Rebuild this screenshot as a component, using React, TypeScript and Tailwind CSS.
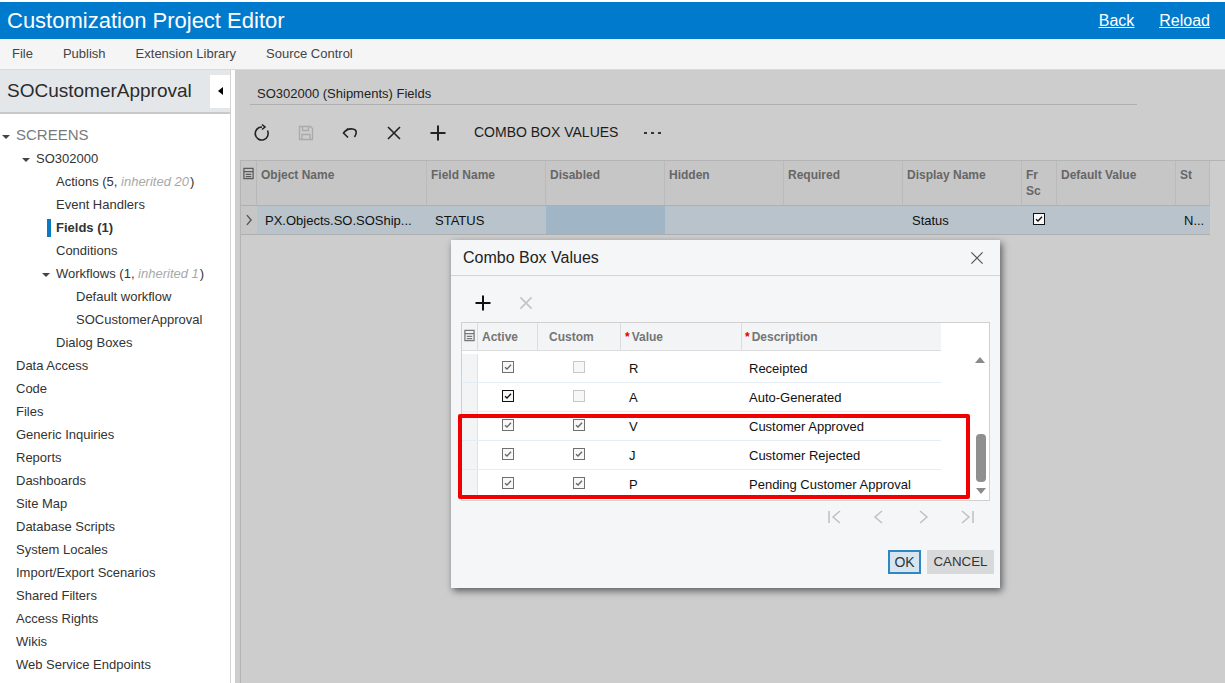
import React from "react";

const font = "font-['Liberation_Sans',Arial,sans-serif]";

type NavItem = { label: string; indent: number; caret?: boolean; muted?: string; active?: boolean; big?: boolean };

const navItems: NavItem[] = [
  { label: "SCREENS", indent: 16, caret: true, big: true },
  { label: "SO302000", indent: 36, caret: true },
  { label: "Actions (5, ", indent: 56, muted: "inherited 20" },
  { label: "Event Handlers", indent: 56 },
  { label: "Fields (1)", indent: 56, active: true },
  { label: "Conditions", indent: 56 },
  { label: "Workflows (1, ", indent: 56, caret: true, muted: "inherited 1" },
  { label: "Default workflow", indent: 76 },
  { label: "SOCustomerApproval", indent: 76 },
  { label: "Dialog Boxes", indent: 56 },
  { label: "Data Access", indent: 16 },
  { label: "Code", indent: 16 },
  { label: "Files", indent: 16 },
  { label: "Generic Inquiries", indent: 16 },
  { label: "Reports", indent: 16 },
  { label: "Dashboards", indent: 16 },
  { label: "Site Map", indent: 16 },
  { label: "Database Scripts", indent: 16 },
  { label: "System Locales", indent: 16 },
  { label: "Import/Export Scenarios", indent: 16 },
  { label: "Shared Filters", indent: 16 },
  { label: "Access Rights", indent: 16 },
  { label: "Wikis", indent: 16 },
  { label: "Web Service Endpoints", indent: 16 },
  { label: "Analytical Reports", indent: 16 },
];

const columns = [
  { label: "Object Name", width: "w-[170px]" },
  { label: "Field Name", width: "w-[119px]" },
  { label: "Disabled", width: "w-[119px]" },
  { label: "Hidden", width: "w-[119px]" },
  { label: "Required", width: "w-[119px]" },
  { label: "Display Name", width: "w-[119px]" },
  { label: "Fr Sc", width: "w-[35px]", wrap: true },
  { label: "Default Value", width: "w-[119px]" },
  { label: "St", width: "w-[34px]" },
];

const comboRows = [
  { active: true, custom: false, value: "R", text: "Receipted", dark: false },
  { active: true, custom: false, value: "A", text: "Auto-Generated", dark: true },
  { active: true, custom: true, value: "V", text: "Customer Approved", dark: false },
  { active: true, custom: true, value: "J", text: "Customer Rejected", dark: false },
  { active: true, custom: true, value: "P", text: "Pending Customer Approval", dark: false },
];

const Stroke = ({ children, size = 20, color = "#222", width = 1.6 }: { children: React.ReactNode; size?: number; color?: string; width?: number }) => (
  <svg width={size} height={size} viewBox="0 0 20 20" fill="none" stroke={color} strokeWidth={width}>
    {children}
  </svg>
);

const NoteIcon = ({ color }: { color: string }) => (
  <svg width="11" height="13" viewBox="0 0 12 14" fill="none" stroke={color} strokeWidth="1.4">
    <path d="M1 1.500h10v11H1z" />
    <path d="M1 5h10M3 8h6M3 10.500h6" />
  </svg>
);

const Check = ({ on, strong }: { on: boolean; strong?: boolean }) => (
  <span className={`flex h-3 w-3 items-center justify-center border bg-[#f7f7f7] ${strong ? "border-[#111]" : on ? "border-[#707070]" : "border-[#c8c8c8]"}`}>
    {on && (
      <svg width="10" height="10" viewBox="0 0 10 10" fill="none" stroke={strong ? "#111" : "#666"} strokeWidth="1.3">
        <path d="M2 5.200l2 1.800 4-4.200" />
      </svg>
    )}
  </span>
);

const Sidebar = () => (
  <aside className="flex w-[231px] shrink-0 flex-col overflow-hidden border-r border-[#d4d4d4] bg-white">
    <div className="flex h-[44px] shrink-0 items-center justify-between border-b-2 border-[#c9c9c9] bg-[#e4e7ea] pl-[7px]">
      <span className="text-[19px] text-[#2b2b2b]">SOCustomerApproval</span>
      <span className="flex h-[33px] w-[20px] items-center justify-center bg-white">
        <span className="h-0 w-0 border-y-[4px] border-r-[5px] border-y-transparent border-r-black" />
      </span>
    </div>
    <nav className="flex flex-col pt-[10px]">
      {navItems.map((item) => (
        <div
          key={item.label}
          className={`relative flex h-[23px] shrink-0 items-center whitespace-pre text-[13px] text-[#333] ${item.active ? "font-bold" : ""}`}
          style={{ paddingLeft: item.indent }}
        >
          {item.caret && (
            <span
              className="absolute top-[11px] h-0 w-0 border-x-[4px] border-t-[4px] border-x-transparent border-t-[#444]"
              style={{ left: item.indent - 14 }}
            />
          )}
          {item.active && <span className="absolute left-[47px] top-[3px] h-[18px] w-[4px] bg-[#0a78c2]" />}
          {item.big ? <span className="text-[15px] text-[#7a7a7a]">{item.label}</span> : item.label}
          {item.muted && (
            <>
              <i className="pr-[1px] text-[#a8a8a8]">{item.muted}</i>)
            </>
          )}
        </div>
      ))}
    </nav>
  </aside>
);

const FieldsGrid = () => (
  <div className="ml-[5px] flex-1 border-t border-l border-[#b4b4b4] text-[12px]">
    <div className="flex h-[44px]">
      <div className="flex w-[16px] shrink-0 justify-center border-r border-[#b8b8b8] bg-[#c6c6c6] pt-[6px]">
        <NoteIcon color="#5c5c5c" />
      </div>
      {columns.map((col) => (
        <div key={col.label} className={`${col.width} shrink-0 overflow-hidden border-r border-[#bababa] bg-[#c6c6c6] pl-[4px] pt-[6px] font-bold leading-[16px] text-[#666]`}>
          <span className={col.wrap ? "block w-min" : "block whitespace-nowrap"}>{col.label}</span>
        </div>
      ))}
    </div>
    <div className="flex h-[30px] w-[969px] items-stretch border-y border-[#afafaf] bg-[#b8c3cb] text-[13px] text-[#111]">
      <div className="flex w-[16px] shrink-0 items-center justify-center bg-[#c6c6c6]">
        <Stroke size={14} color="#555" width={2}><path d="M7 3l6 7-6 7" /></Stroke>
      </div>
      <div className="flex w-[170px] shrink-0 items-center pl-[8px] pt-[1px]">PX.Objects.SO.SOShip...</div>
      <div className="flex w-[119px] shrink-0 items-center pl-[8px] pt-[1px]">STATUS</div>
      <div className="w-[119px] shrink-0 bg-[#a0b5c5]" />
      <div className="w-[119px] shrink-0" />
      <div className="w-[119px] shrink-0" />
      <div className="flex w-[119px] shrink-0 items-center pl-[9px] pt-[1px]">Status</div>
      <div className="flex w-[35px] shrink-0 items-center justify-center pb-[2px] pr-[1px]"><Check on strong /></div>
      <div className="w-[119px] shrink-0" />
      <div className="flex w-[34px] shrink-0 items-center pl-[8px] pt-[1px]">N...</div>
    </div>
  </div>
);

const ComboDialog = () => (
  <div className="absolute left-[216px] top-[170px] h-[348px] w-[549px] bg-[#f5f6f8] shadow-[2px_3px_7px_rgba(0,0,0,0.55)]">
    <div className="flex h-[36px] items-center justify-between border-b border-[#d4d4d4] pl-[12px] pr-[15px] pt-[1px] text-[16px] text-[#222]">
      Combo Box Values
      <Stroke size={16} color="#555" width={1.5}><path d="M3 3l14 14M17 3L3 17" /></Stroke>
    </div>
    <div className="flex h-[46px] items-center gap-[25px] pl-[22px] pt-[8px]">
      <Stroke size={20} color="#111" width={2}><path d="M10 2.500v15M2.500 10h15" /></Stroke>
      <Stroke size={16} color="#c4c4c4" width={2}><path d="M3 3l14 14M17 3L3 17" /></Stroke>
    </div>
    <div className="relative mx-[10px] flex h-[179px] border border-[#d0d0d0] bg-white">
      <div className="flex w-[479px] flex-col">
        <div className="flex h-[28px] shrink-0 border-b border-[#dcdcdc] bg-[#f3f4f6] text-[12px] font-bold text-[#757575]">
          <div className="flex w-[16px] shrink-0 justify-center border-r border-[#dcdcdc] pt-[6px]"><NoteIcon color="#777" /></div>
          <div className="flex w-[60px] shrink-0 items-center border-r border-[#dcdcdc] pl-[4px]">Active</div>
          <div className="flex w-[83px] shrink-0 items-center border-r border-[#dcdcdc] pl-[11px]">Custom</div>
          <div className="flex w-[121px] shrink-0 items-center border-r border-[#dcdcdc] pl-[4px]"><span className="mr-[2px] text-[#e00000]">*</span>Value</div>
          <div className="flex flex-1 items-center pl-[3px]"><span className="mr-[2px] text-[#e00000]">*</span>Description</div>
        </div>
        <div className="h-[3px] shrink-0" />
        {comboRows.map((row) => (
          <div key={row.value} className="flex h-[29px] shrink-0 border-b border-[#e4edf3] text-[13px] text-[#111] last:border-transparent">
            <div className="w-[16px] shrink-0 border-r border-[#e2e2e2] bg-[#f3f4f6]" />
            <div className="flex w-[60px] shrink-0 items-center justify-center pb-[2px] pr-[1px]"><Check on={row.active} strong={row.dark} /></div>
            <div className="flex w-[83px] shrink-0 items-center justify-center pb-[2px] pr-[2px]"><Check on={row.custom} /></div>
            <div className="flex w-[121px] shrink-0 items-center pl-[8px] pt-[2px]">{row.value}</div>
            <div className="flex flex-1 items-center pl-[7px] pt-[2px]">{row.text}</div>
          </div>
        ))}
      </div>
      <div className="relative flex-1">
        <span className="absolute left-[34px] top-[34px] h-0 w-0 border-x-[5px] border-b-[6px] border-x-transparent border-b-[#8a8a8a]" />
        <span className="absolute left-[35px] top-[111px] h-[48px] w-[10px] rounded-[4px] bg-[#8f8f8f]" />
        <span className="absolute left-[35px] top-[165px] h-0 w-0 border-x-[5px] border-t-[6px] border-x-transparent border-t-[#8a8a8a]" />
      </div>
      <div className="pointer-events-none absolute left-[-4px] top-[91px] h-[85px] w-[512px] rounded-[2px] border-[4px] border-[#f00000]" />
    </div>
    <div className="flex h-[30px] items-center justify-end gap-[24px] pr-[23px] pt-[2px]">
      <Stroke size={20} color="#c0c0c0" width={1.5}><path d="M4 4v12M15 4l-7 6 7 6" /></Stroke>
      <Stroke size={20} color="#c0c0c0" width={1.5}><path d="M13 4l-7 6 7 6" /></Stroke>
      <Stroke size={20} color="#c0c0c0" width={1.5}><path d="M7 4l7 6-7 6" /></Stroke>
      <Stroke size={20} color="#c0c0c0" width={1.5}><path d="M16 4v12M5 4l7 6-7 6" /></Stroke>
    </div>
    <div className="flex justify-end gap-[6px] pr-[6px] pt-[19px] text-[14px] text-[#333]">
      <div className="flex h-[24px] w-[33px] items-center justify-center border-2 border-[#2f87c2] bg-[#d5e6f2]">OK</div>
      <div className="flex h-[24px] w-[67px] items-center justify-center bg-[#d8d9db] text-[13.300px]">CANCEL</div>
    </div>
  </div>
);

const App: React.FC = () => {
  return (
    <div className={`${font} flex h-[683px] w-[1225px] flex-col overflow-hidden bg-white pt-[2px]`}>
      <header className="flex h-[37px] shrink-0 items-center justify-between bg-[#007acc] pl-[7px] pr-[15px] text-white">
        <h1 className="text-[22px]">Customization Project Editor</h1>
        <div className="flex gap-[25px] text-[16px] underline">
          <a>Back</a>
          <a>Reload</a>
        </div>
      </header>
      <div className="flex h-[31px] shrink-0 items-center gap-[30px] border-b border-[#dadada] bg-[#f5f5f5] pl-[12px] text-[13px] text-[#444]">
        <span>File</span>
        <span>Publish</span>
        <span>Extension Library</span>
        <span>Source Control</span>
      </div>
      <div className="flex min-h-0 flex-1">
        <Sidebar />
        <main className="relative flex flex-1 flex-col overflow-hidden border-l-[4px] border-white bg-[#cdcdcd]">
          <div className="ml-[15px] mr-[88px] mt-[14px] h-[21px] shrink-0 border-b border-[#b0b0b0] pl-[7px] pt-[1px] text-[13px] leading-[18px] text-[#222]">
            SO302000 (Shipments) Fields
          </div>
          <div className="flex h-[55px] shrink-0 items-center gap-[24px] pl-[17px] text-[14px] text-[#1c1c1c]">
            <Stroke><path d="M15.500 7.500A6.500 6.500 0 1 1 10 4" /><path d="M10 1.500l3 2.500-3 2.500" /></Stroke>
            <Stroke color="#aaaaaa" width={1.3}><path d="M3.500 3.500h11l2 2v11h-13zM6.500 3.500v4h6v-4M6 16.500v-5h8v5" /></Stroke>
            <Stroke><path d="M8 5.500L3.500 10L8 14.500M3.500 10C6 6.500 10 5.500 13 6C16.500 6.500 17.500 10 14.500 14" /></Stroke>
            <Stroke><path d="M4 4l12 12M16 4L4 16" /></Stroke>
            <Stroke width={2}><path d="M10 2.500v15M2.500 10h15" /></Stroke>
            <span className="ml-[2px]">COMBO BOX VALUES</span>
            <span className="ml-[2px] flex gap-[4px]">
              <i className="h-[2px] w-[3px] bg-[#333]" />
              <i className="h-[2px] w-[3px] bg-[#333]" />
              <i className="h-[2px] w-[3px] bg-[#333]" />
            </span>
          </div>
          <FieldsGrid />
          <ComboDialog />
        </main>
      </div>
    </div>
  );
};

export default App;
